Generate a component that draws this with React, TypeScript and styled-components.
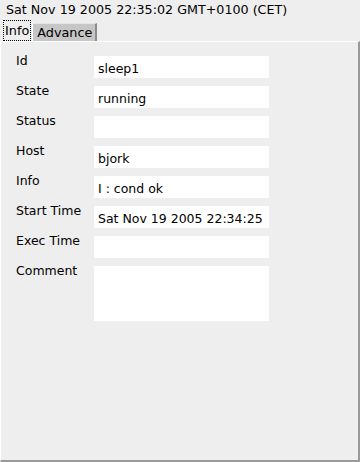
import React from "react";
import styled, { createGlobalStyle } from "styled-components";

const Global = createGlobalStyle`
  html, body {
    margin: 0;
    padding: 0;
    background: #eeeeee;
  }
  body {
    font-family: "DejaVu Sans", Verdana, sans-serif;
    font-size: 12.5px;
    color: #000;
  }
`;

const Page = styled.div`
  width: 360px;
  height: 462px;
  display: flex;
  flex-direction: column;
  background: #eeeeee;
  overflow: hidden;
`;

const Header = styled.div`
  height: 20px;
  padding: 2px 0 0 6px;
  box-sizing: border-box;
  font-size: 12.7px;
  line-height: 15px;
  white-space: nowrap;
`;

const TabBar = styled.div`
  display: flex;
  align-items: flex-end;
  height: 21px;
  padding-left: 3px;
`;

const Tab = styled.div<{ $active?: boolean }>`
  box-sizing: border-box;
  height: ${(p) => (p.$active ? "21px" : "18px")};
  padding: ${(p) => (p.$active ? "0 2px 0 0" : "1px 3px 0 4px")};
  background: ${(p) => (p.$active ? "#eeeeee" : "#c6c6c6")};
  border-left: 1px solid #ffffff;
  border-top: 1px solid ${(p) => (p.$active ? "#eeeeee" : "#e6e6e6")};
  border-right: ${(p) => (p.$active ? "none" : "2px solid #8c8c8c")};
  font-size: 12.8px;
  line-height: 15px;
  white-space: nowrap;
`;

const Focus = styled.span`
  display: inline-block;
  outline: 1px dotted #000;
  outline-offset: 0;
  padding: 2px 1px 2px 1px;
  line-height: 15px;
`;

const Panel = styled.div`
  flex: 1;
  box-sizing: border-box;
  border-top: 1px solid #ffffff;
  border-left: 1px solid #ffffff;
  border-right: 2px solid #9a9a9a;
  border-bottom: 2px solid #9a9a9a;
  padding: 14px 0 0 15px;
`;

const FieldGrid = styled.div`
  display: grid;
  grid-template-columns: 78px 175px;
  row-gap: 8px;
`;

const Label = styled.div`
  line-height: 15px;
  margin-top: -3px;
  white-space: nowrap;
`;

const ValueBox = styled.div<{ $tall?: boolean }>`
  box-sizing: border-box;
  height: ${(p) => (p.$tall ? "55px" : "22px")};
  background: #ffffff;
  padding: 5px 0 0 4px;
  line-height: 15px;
  white-space: nowrap;
  overflow: hidden;
`;

const fields: { label: string; value: string; tall?: boolean }[] = [
  { label: "Id", value: "sleep1" },
  { label: "State", value: "running" },
  { label: "Status", value: "" },
  { label: "Host", value: "bjork" },
  { label: "Info", value: "I : cond ok" },
  { label: "Start Time", value: "Sat Nov 19 2005 22:34:25" },
  { label: "Exec Time", value: "" },
  { label: "Comment", value: "", tall: true },
];

export default function App() {
  return (
    <>
      <Global />
      <Page>
        <Header>Sat Nov 19 2005 22:35:02 GMT+0100 (CET)</Header>
        <TabBar>
          <Tab $active>
            <Focus>Info</Focus>
          </Tab>
          <Tab>Advance</Tab>
        </TabBar>
        <Panel>
          <FieldGrid>
            {fields.map((f) => (
              <React.Fragment key={f.label}>
                <Label>{f.label}</Label>
                <ValueBox $tall={f.tall}>{f.value}</ValueBox>
              </React.Fragment>
            ))}
          </FieldGrid>
        </Panel>
      </Page>
    </>
  );
}
